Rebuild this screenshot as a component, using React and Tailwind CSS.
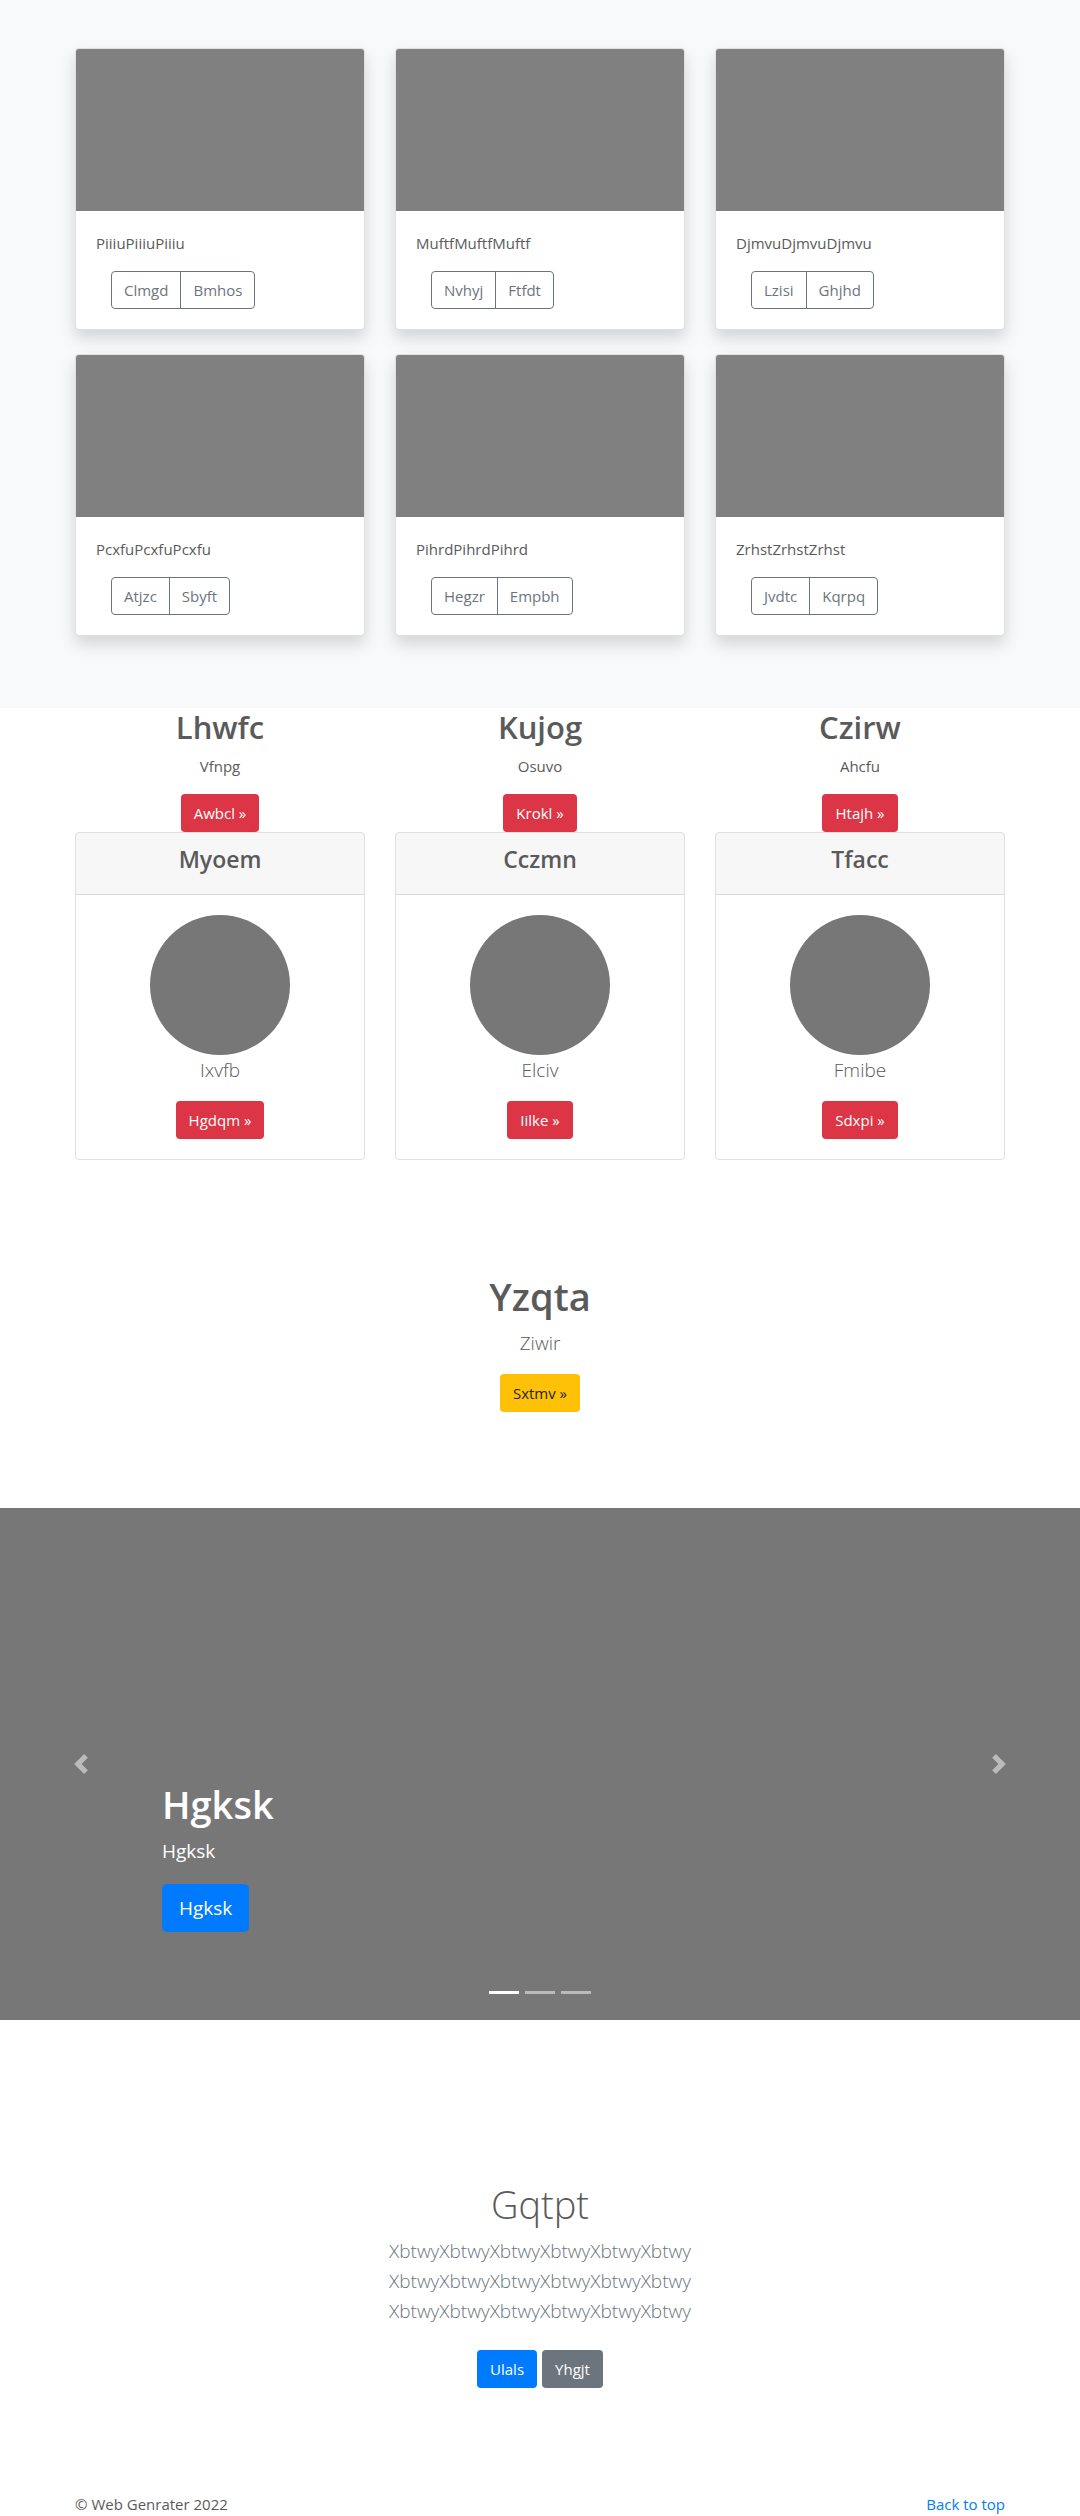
import React from "react";

const albums = [
  { text: "PiiiuPiiiuPiiiu", actions: ["Clmgd", "Bmhos"] },
  { text: "MuftfMuftfMuftf", actions: ["Nvhyj", "Ftfdt"] },
  { text: "DjmvuDjmvuDjmvu", actions: ["Lzisi", "Ghjhd"] },
  { text: "PcxfuPcxfuPcxfu", actions: ["Atjzc", "Sbyft"] },
  { text: "PihrdPihrdPihrd", actions: ["Hegzr", "Empbh"] },
  { text: "ZrhstZrhstZrhst", actions: ["Jvdtc", "Kqrpq"] },
];

const features = [
  { title: "Lhwfc", text: "Vfnpg", action: "Awbcl »" },
  { title: "Kujog", text: "Osuvo", action: "Krokl »" },
  { title: "Czirw", text: "Ahcfu", action: "Htajh »" },
];

const profiles = [
  { title: "Myoem", text: "Ixvfb", action: "Hgdqm »" },
  { title: "Cczmn", text: "Elciv", action: "Iilke »" },
  { title: "Tfacc", text: "Fmibe", action: "Sdxpi »" },
];

const tones = {
  danger: "bg-[#dc3545] text-white",
  warning: "bg-[#ffc107] text-[#212529]",
  primary: "bg-[#007bff] text-white",
  secondary: "bg-[#6c757d] text-white",
};

function Button({ tone, children }) {
  return (
    <button type="button" className={`h-[38px] rounded px-[13px] text-[15px] leading-6 ${tones[tone]}`}>
      {children}
    </button>
  );
}

function Container({ className = "", children }) {
  return <div className={`mx-auto max-w-[960px] px-[15px] ${className}`}>{children}</div>;
}

function AlbumCard({ text, actions }) {
  return (
    <article className="overflow-hidden rounded border border-black/12 bg-white shadow-[0_8px_16px_rgba(0,0,0,0.15)]">
      <div className="h-[162px] bg-[#808080]" />
      <div className="p-5">
        <p className="mb-4">{text}</p>
        <div className="ml-[15px] flex text-[#6c757d]">
          <button type="button" className="h-[38px] rounded-l border border-[#6c757d] px-3">
            {actions[0]}
          </button>
          <button type="button" className="-ml-px h-[38px] rounded-r border border-[#6c757d] px-3">
            {actions[1]}
          </button>
        </div>
      </div>
    </article>
  );
}

function Carousel() {
  return (
    <section className="relative h-[512px] bg-[#777]" aria-label="Carousel">
      <div className="absolute inset-x-[15%] bottom-[88px] text-white">
        <h1 className="mb-2 text-[38px] leading-[48px] font-semibold">Hgksk</h1>
        <p className="mb-[18px] text-[19px] leading-[30px]">Hgksk</p>
        <button type="button" className="h-12 rounded-[5px] bg-[#007bff] px-[17px] text-[19px] leading-[30px]">
          Hgksk
        </button>
      </div>
      <button
        type="button"
        aria-label="Previous"
        className="absolute inset-y-0 left-0 flex w-[15%] items-center justify-center text-white opacity-50"
      >
        <svg viewBox="0 0 8 8" className="size-5" fill="currentColor">
          <path d="M5.25 0l-4 4 4 4 1.5-1.5L4.25 4l2.5-2.5L5.25 0z" />
        </svg>
      </button>
      <button
        type="button"
        aria-label="Next"
        className="absolute inset-y-0 right-0 flex w-[15%] items-center justify-center text-white opacity-50"
      >
        <svg viewBox="0 0 8 8" className="size-5" fill="currentColor">
          <path d="M2.75 0l-1.5 1.5L3.75 4l-2.5 2.5L2.75 8l4-4-4-4z" />
        </svg>
      </button>
      <div className="absolute inset-x-[15%] bottom-[26px] flex justify-center gap-[6px]">
        <button type="button" aria-label="Slide 1" className="h-[3px] w-[30px] bg-white" />
        <button type="button" aria-label="Slide 2" className="h-[3px] w-[30px] bg-white/50" />
        <button type="button" aria-label="Slide 3" className="h-[3px] w-[30px] bg-white/50" />
      </div>
    </section>
  );
}

export default function App() {
  return (
    <div className="bg-white font-['Open_Sans','Noto_Sans',sans-serif] text-[15px] leading-6 text-[#5a5a5a]">
      <section className="bg-[#f8f9fa] pt-12 pb-[72px]">
        <Container className="grid grid-cols-3 gap-x-[30px] gap-y-6">
          {albums.map((album) => (
            <AlbumCard key={album.text} {...album} />
          ))}
        </Container>
      </section>

      <Container className="grid grid-cols-3 gap-x-[30px] text-center">
        {features.map(({ title, text, action }) => (
          <div key={title}>
            <h2 className="mb-2 text-[31px] leading-[38px] font-semibold">{title}</h2>
            <p className="mb-4">{text}</p>
            <Button tone="danger">{action}</Button>
          </div>
        ))}
      </Container>

      <Container className="grid grid-cols-3 gap-x-[30px] text-center">
        {profiles.map(({ title, text, action }) => (
          <article key={title} className="overflow-hidden rounded border border-black/12">
            <header className="border-b border-black/12 bg-black/3 px-5 pt-3 pb-5">
              <h4 className="text-[23px] leading-[29px] font-semibold">{title}</h4>
            </header>
            <div className="p-5">
              <div className="mx-auto size-[140px] rounded-full bg-[#777]" />
              <p className="mb-4 text-[19px] leading-[30px] font-light">{text}</p>
              <Button tone="danger">{action}</Button>
            </div>
          </article>
        ))}
      </Container>

      <section className="pt-28 pb-24 text-center">
        <h1 className="mb-2 text-[38px] leading-[48px] font-semibold">Yzqta</h1>
        <p className="mb-4 text-[19px] leading-[30px] font-light">Ziwir</p>
        <Button tone="warning">Sxtmv »</Button>
      </section>

      <Carousel />

      <section className="pt-40 pb-[104px] text-center">
        <h1 className="mb-2 text-[38px] leading-[48px] font-light">Gqtpt</h1>
        <p className="mb-6 text-[19px] leading-[30px] font-light text-[#6c757d]">
          XbtwyXbtwyXbtwyXbtwyXbtwyXbtwy
          <br />
          XbtwyXbtwyXbtwyXbtwyXbtwyXbtwy
          <br />
          XbtwyXbtwyXbtwyXbtwyXbtwyXbtwy
        </p>
        <div className="flex justify-center gap-[5px]">
          <Button tone="primary">Ulals</Button>
          <Button tone="secondary">Yhgjt</Button>
        </div>
      </section>

      <footer>
        <Container className="flex justify-between">
          <p>© Web Genrater 2022</p>
          <a href="#" className="text-[#007bff]">
            Back to top
          </a>
        </Container>
      </footer>
    </div>
  );
}
